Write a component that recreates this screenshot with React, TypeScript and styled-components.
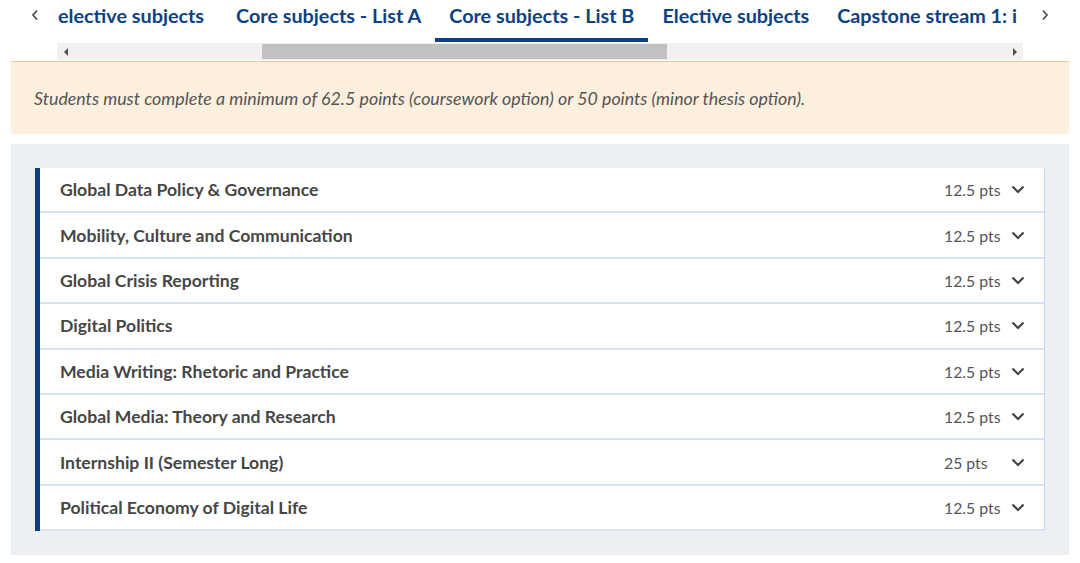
import React from "react";
import styled, { createGlobalStyle } from "styled-components";

const Global = createGlobalStyle`
  html, body { margin: 0; padding: 0; background: #fff; }
  body { font-family: Lato, "Noto Sans", Arial, sans-serif; width: 1080px; height: 563px; overflow: hidden; }
`;

const TopBar = styled.div`
  display: flex;
  align-items: flex-start;
  height: 61px;
`;

const Arrow = styled.div<{ $side: "left" | "right" }>`
  width: 57px;
  height: 30px;
  display: flex;
  align-items: center;
  padding-left: ${(p) => (p.$side === "left" ? "31px" : "18px")};
  box-sizing: border-box;
`;

const TabColumn = styled.div`
  width: 966px;
  display: flex;
  flex-direction: column;
`;

const TabStrip = styled.div`
  display: flex;
  overflow: hidden;
  height: 43px;
  white-space: nowrap;
`;

const Tab = styled.div<{ $active?: boolean; $first?: boolean }>`
  flex: none;
  padding: ${(p) => (p.$first ? "0 18px 0 1px" : "0 14px")};
  height: 42px;
  box-sizing: border-box;
  font-size: 19.8px;
  font-weight: 700;
  color: #0c4282;
  line-height: 30px;
  border-bottom: 4px solid ${(p) => (p.$active ? "#0b4183" : "transparent")};
`;

const Scrollbar = styled.div`
  height: 17px;
  background: #f1f1f1;
  display: flex;
  align-items: center;
`;

const ScrollBtn = styled.div`
  width: 17px;
  height: 17px;
  display: flex;
  align-items: center;
  justify-content: center;
  flex: none;
`;

const Track = styled.div`
  flex: 1;
  height: 17px;
  display: flex;
  align-items: center;
`;

const Thumb = styled.div`
  height: 15px;
  background: #c1c1c1;
`;

const Info = styled.div`
  margin: 0 11px;
  height: 73px;
  box-sizing: border-box;
  background: #fcefdd;
  border-top: 1px solid #f4c38a;
  display: flex;
  align-items: center;
  padding-left: 23px;
  font-style: italic;
  font-size: 17.8px;
  color: #555;
`;

const Panel = styled.div`
  margin: 10px 11px 0;
  background: #ecf0f3;
  padding: 24px;
`;

const List = styled.div`
  border-left: 5px solid #0b3f80;
  border-right: 1px solid #c4d8f0;
  background: #fff;
`;

const Row = styled.div`
  height: 45.4px;
  box-sizing: border-box;
  border-bottom: 2px solid #d6e4f5;
  display: flex;
  align-items: center;
  padding-left: 20px;
`;

const Title = styled.div`
  flex: 1;
  font-size: 17.6px;
  font-weight: 700;
  color: #464646;
`;

const Pts = styled.div`
  width: 67px;
  font-size: 15.8px;
  color: #555;
`;

const Chevron = styled.div`
  width: 33px;
  display: flex;
  align-items: center;
`;

const subjects: [string, string][] = [
  ["Global Data Policy & Governance", "12.5 pts"],
  ["Mobility, Culture and Communication", "12.5 pts"],
  ["Global Crisis Reporting", "12.5 pts"],
  ["Digital Politics", "12.5 pts"],
  ["Media Writing: Rhetoric and Practice", "12.5 pts"],
  ["Global Media: Theory and Research", "12.5 pts"],
  ["Internship II (Semester Long)", "25 pts"],
  ["Political Economy of Digital Life", "12.5 pts"],
];

const tabs = [
  "elective subjects",
  "Core subjects - List A",
  "Core subjects - List B",
  "Elective subjects",
  "Capstone stream 1: i",
];

export default function App() {
  return (
    <>
      <Global />
      <TopBar>
        <Arrow $side="left">
          <svg width="8" height="12" viewBox="0 0 8 12">
            <path d="M6 1.5 L2 6 L6 10.5" fill="none" stroke="#444" strokeWidth="1.6" />
          </svg>
        </Arrow>
        <TabColumn>
          <TabStrip>
            {tabs.map((t, i) => (
              <Tab key={t} $first={i === 0} $active={i === 2}>
                {t}
              </Tab>
            ))}
          </TabStrip>
          <Scrollbar>
            <ScrollBtn>
              <svg width="6" height="8" viewBox="0 0 6 8">
                <path d="M5 0 L1 4 L5 8 Z" fill="#505050" />
              </svg>
            </ScrollBtn>
            <Track>
              <div style={{ width: 188, flex: "none" }} />
              <Thumb style={{ width: 405 }} />
            </Track>
            <ScrollBtn>
              <svg width="6" height="8" viewBox="0 0 6 8">
                <path d="M1 0 L5 4 L1 8 Z" fill="#505050" />
              </svg>
            </ScrollBtn>
          </Scrollbar>
        </TabColumn>
        <Arrow $side="right">
          <svg width="8" height="12" viewBox="0 0 8 12">
            <path d="M2 1.5 L6 6 L2 10.5" fill="none" stroke="#444" strokeWidth="1.6" />
          </svg>
        </Arrow>
      </TopBar>
      <Info>
        Students must complete a minimum of 62.5 points (coursework option) or 50 points (minor thesis option).
      </Info>
      <Panel>
        <List>
          {subjects.map(([name, pts]) => (
            <Row key={name}>
              <Title>{name}</Title>
              <Pts>{pts}</Pts>
              <Chevron>
                <svg width="14" height="9" viewBox="0 0 14 9">
                  <path d="M1.5 1.5 L7 7 L12.5 1.5" fill="none" stroke="#444" strokeWidth="2.2" />
                </svg>
              </Chevron>
            </Row>
          ))}
        </List>
      </Panel>
    </>
  );
}
